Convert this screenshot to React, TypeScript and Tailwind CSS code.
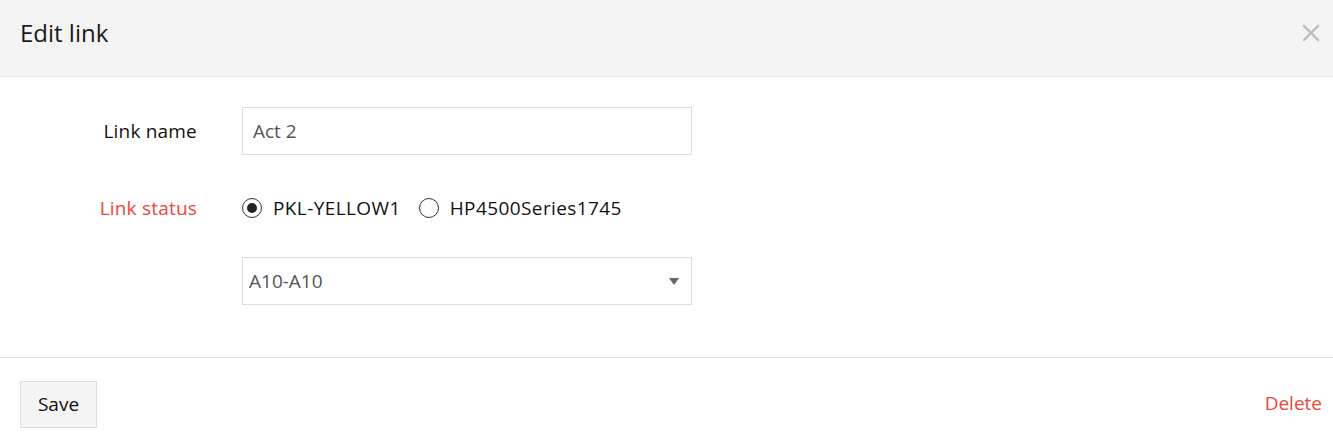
import React, { useState } from 'react';

export default function App() {
  const [status, setStatus] = useState('pkl');

  return (
    <div className="w-[1333px] h-[439px] bg-white text-[#111] overflow-hidden" style={{ fontFamily: '"Open Sans", sans-serif' }}>
      <div className="h-[77px] bg-[#f4f4f4] border-b border-[#e3e3e3] flex items-center justify-between pl-5 pr-[13px]">
        <h1 className="text-[24px] leading-none text-[#1a1a1a] -mt-[10px]">Edit link</h1>
        <button className="text-[#bdbdbd] -mt-[10px]">
          <svg width="18" height="18" viewBox="0 0 18 18" stroke="currentColor" strokeWidth="2.4" strokeLinecap="square">
            <path d="M2 2L16 16M16 2L2 16" />
          </svg>
        </button>
      </div>

      <div className="pt-[30px] pb-[52px] flex flex-col">
        <div className="flex items-center h-[48px]">
          <label className="w-[197px] text-right text-[19px] tracking-[0.2px]">Link name</label>
          <input
            defaultValue="Act 2"
            className="ml-[45px] w-[450px] h-[48px] border border-[#dcdcdc] px-[10px] text-[19px] text-[#555] outline-none"
          />
        </div>

        <div className="flex items-center h-[24px] mt-[41px]">
          <span className="w-[197px] text-right text-[19px] tracking-[0.2px] text-[#e8473d]">Link status</span>
          <div className="ml-[45px] flex items-center gap-[18px] text-[19px] tracking-[0.4px]">
            <label className="flex items-center gap-[11px] cursor-pointer" onClick={() => setStatus('pkl')}>
              <span className="w-[20px] h-[20px] rounded-full border border-[#333] flex items-center justify-center">
                {status === 'pkl' && <span className="w-[10px] h-[10px] rounded-full bg-[#222]" />}
              </span>
              PKL-YELLOW1
            </label>
            <label className="flex items-center gap-[11px] cursor-pointer" onClick={() => setStatus('hp')}>
              <span className="w-[20px] h-[20px] rounded-full border border-[#333] flex items-center justify-center">
                {status === 'hp' && <span className="w-[10px] h-[10px] rounded-full bg-[#222]" />}
              </span>
              HP4500Series1745
            </label>
          </div>
        </div>

        <div className="flex items-center mt-[37px]">
          <div className="w-[197px]" />
          <div className="ml-[45px] w-[450px] h-[48px] border border-[#dcdcdc] flex items-center justify-between pl-[6px] pr-[12px]">
            <span className="text-[19px] text-[#555]">A10-A10</span>
            <svg width="10" height="7" viewBox="0 0 10 7"><path d="M0 0H10L5 7Z" fill="#666" /></svg>
          </div>
        </div>
      </div>

      <div className="border-t border-[#e3e3e3] flex items-center justify-between pl-5 pr-[11px] pt-[23px]">
        <button className="w-[77px] h-[47px] bg-[#f4f4f4] border border-[#dcdcdc] text-[19px] text-[#111]">Save</button>
        <button className="text-[19px] text-[#e8473d] -mt-[2px]">Delete</button>
      </div>
    </div>
  );
}
